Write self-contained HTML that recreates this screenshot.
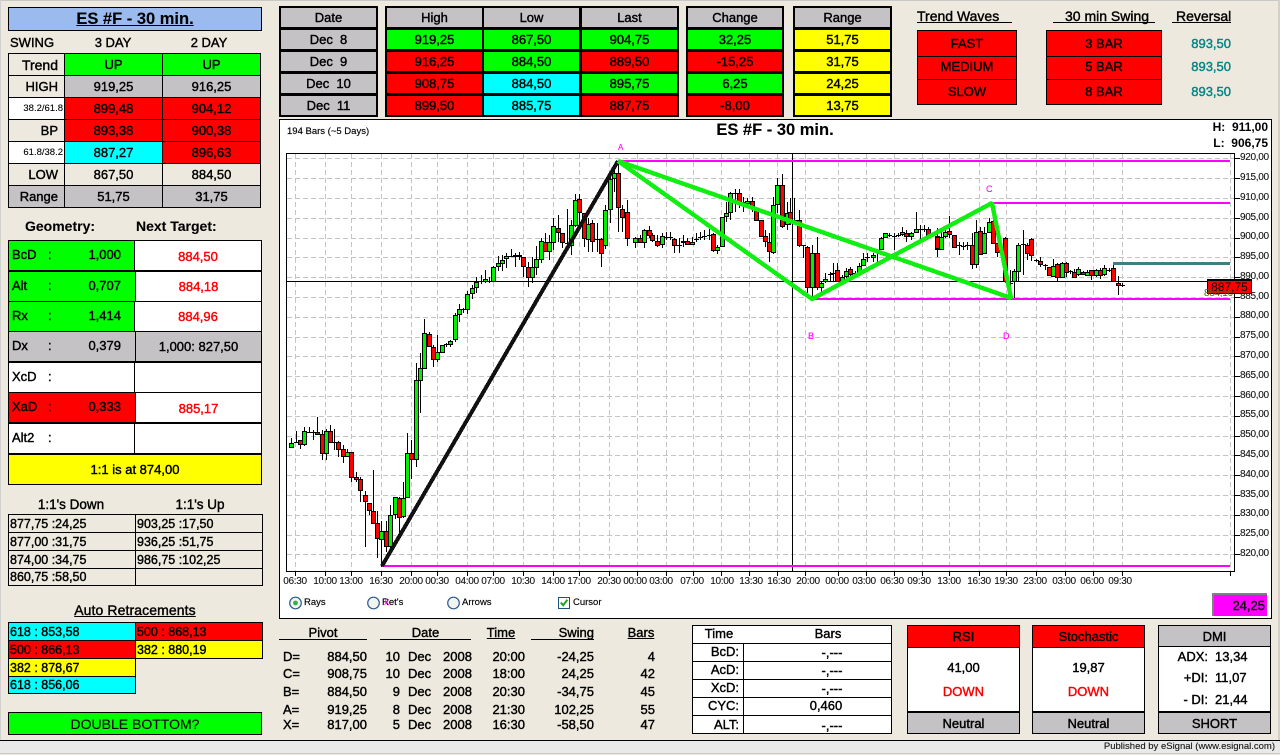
<!DOCTYPE html>
<html><head><meta charset="utf-8"><title>ES #F - 30 min.</title>
<style>
html,body{margin:0;padding:0}
body{width:1280px;height:754px;overflow:hidden;background:#ede9de;position:relative;font-family:"Liberation Sans",Arial,sans-serif;font-size:13px;color:#000;-webkit-text-stroke:.4px currentColor}
div{box-sizing:border-box;white-space:pre}
.a{position:absolute}
.b{position:absolute;border:1px solid #000;display:flex;align-items:center;justify-content:center}
.f{position:absolute;display:flex;align-items:center;justify-content:center}
.x{position:absolute;height:16px;line-height:16px}
.r{text-align:right}.c{text-align:center}
.g{background:#0f0}.R{background:#f00}.C{background:#0ff}.Y{background:#ff0}.S{background:#c4c2c5}.W{background:#fff}.K{background:#000}
.rt{color:#f00}
.lb{justify-content:flex-start;padding-left:1px}
.xl{position:absolute;top:576px;width:30px;height:12px;line-height:12px;text-align:center;font-size:10px;letter-spacing:-.3px;color:#111;-webkit-text-stroke:.1px #111}
.pl{position:absolute;left:1240px;height:12px;line-height:12px;font-size:10px;letter-spacing:-.3px;color:#111;-webkit-text-stroke:.1px #111}
</style></head><body>

<div class="a" style="left:0;top:0;width:1280px;height:1px;background:#c8c8c8"></div>
<div class="a" style="left:0;top:0;width:1px;height:741px;background:#d0d0d0"></div>
<div class="a" style="left:1278px;top:0;width:2px;height:741px;background:#d4d0c8"></div>

<!-- Title -->
<div class="b" style="left:8px;top:7px;width:254px;height:24px;background:#9bbaee;font-weight:bold;font-size:16.5px;text-decoration:underline;-webkit-text-stroke:.1px #000">ES #F - 30 min.</div>
<div class="x" style="left:10px;top:35px">SWING</div>
<div class="x c" style="left:64px;top:35px;width:98px">3 DAY</div>
<div class="x c" style="left:160px;top:35px;width:98px">2 DAY</div>

<div class="b" style="left:8px;top:53px;width:57px;height:23px;justify-content:flex-end;padding-right:6px;font-size:14px">Trend</div>
<div class="b g" style="left:64px;top:53px;width:99px;height:23px">UP</div>
<div class="b g" style="left:162px;top:53px;width:99px;height:23px">UP</div>
<div class="b" style="left:8px;top:75px;width:57px;height:23px;justify-content:flex-end;padding-right:6px">HIGH</div>
<div class="b S" style="left:64px;top:75px;width:99px;height:23px">919,25</div>
<div class="b S" style="left:162px;top:75px;width:99px;height:23px">916,25</div>
<div class="b W" style="left:8px;top:97px;width:57px;height:23px;justify-content:flex-end;padding-right:1px;font-size:9.5px;-webkit-text-stroke:.1px #000">38.2/61.8</div>
<div class="b R" style="left:64px;top:97px;width:99px;height:23px">899,48</div>
<div class="b R" style="left:162px;top:97px;width:99px;height:23px">904,12</div>
<div class="b" style="left:8px;top:119px;width:57px;height:23px;justify-content:flex-end;padding-right:6px">BP</div>
<div class="b R" style="left:64px;top:119px;width:99px;height:23px">893,38</div>
<div class="b R" style="left:162px;top:119px;width:99px;height:23px">900,38</div>
<div class="b W" style="left:8px;top:141px;width:57px;height:23px;justify-content:flex-end;padding-right:1px;font-size:9.5px;-webkit-text-stroke:.1px #000">61.8/38.2</div>
<div class="b C" style="left:64px;top:141px;width:99px;height:23px">887,27</div>
<div class="b R" style="left:162px;top:141px;width:99px;height:23px">896,63</div>
<div class="b" style="left:8px;top:163px;width:57px;height:23px;justify-content:flex-end;padding-right:6px">LOW</div>
<div class="b" style="left:64px;top:163px;width:99px;height:23px">867,50</div>
<div class="b" style="left:162px;top:163px;width:99px;height:23px">884,50</div>
<div class="b S" style="left:8px;top:185px;width:57px;height:23px;justify-content:flex-end;padding-right:6px">Range</div>
<div class="b S" style="left:64px;top:185px;width:99px;height:23px">51,75</div>
<div class="b S" style="left:162px;top:185px;width:99px;height:23px">31,75</div>

<div class="x" style="left:25px;top:218px;font-weight:bold;font-size:14px;-webkit-text-stroke:.1px #000">Geometry:</div>
<div class="x" style="left:136px;top:218px;font-weight:bold;font-size:14px;-webkit-text-stroke:.1px #000">Next Target:</div>

<!-- Geometry -->
<div class="b g" style="left:8px;top:240px;width:127px;height:32px"></div><div class="b W rt" style="left:134px;top:240px;width:128px;height:32px">884,50</div>
<div class="b g" style="left:8px;top:271px;width:128px;height:31px"></div><div class="b W rt" style="left:135px;top:271px;width:127px;height:31px">884,18</div>
<div class="b g" style="left:8px;top:301px;width:127px;height:31px"></div><div class="b W rt" style="left:134px;top:301px;width:128px;height:31px">884,96</div>
<div class="b S" style="left:8px;top:331px;width:128px;height:32px"></div><div class="b S" style="left:135px;top:331px;width:127px;height:32px;padding-bottom:2px">1,000: 827,50</div>
<div class="b W" style="left:8px;top:362px;width:127px;height:31px"></div><div class="b W" style="left:134px;top:362px;width:128px;height:31px"></div>
<div class="b R" style="left:8px;top:392px;width:128px;height:32px"></div><div class="b W rt" style="left:135px;top:392px;width:127px;height:32px">885,17</div>
<div class="b W" style="left:8px;top:423px;width:127px;height:32px"></div><div class="b W" style="left:134px;top:423px;width:128px;height:32px"></div>
<div class="b Y" style="left:8px;top:454px;width:254px;height:31px">1:1 is at 874,00</div>
<div class="a K" style="left:8px;top:270px;width:254px;height:2px"></div>
<div class="a K" style="left:8px;top:361px;width:254px;height:2px"></div>
<div class="a K" style="left:8px;top:422px;width:254px;height:2px"></div>
<div class="a K" style="left:8px;top:453px;width:254px;height:2px"></div>
<div class="x" style="left:12px;top:247px">BcD</div><div class="x" style="left:48px;top:247px">:</div><div class="x r" style="left:71px;top:247px;width:50px">1,000</div>
<div class="x" style="left:12px;top:278px">Alt</div><div class="x" style="left:48px;top:278px">:</div><div class="x r" style="left:71px;top:278px;width:50px">0,707</div>
<div class="x" style="left:12px;top:308px">Rx</div><div class="x" style="left:48px;top:308px">:</div><div class="x r" style="left:71px;top:308px;width:50px">1,414</div>
<div class="x" style="left:12px;top:338px">Dx</div><div class="x" style="left:48px;top:338px">:</div><div class="x r" style="left:71px;top:338px;width:50px">0,379</div>
<div class="x" style="left:12px;top:369px">XcD</div><div class="x" style="left:48px;top:369px">:</div>
<div class="x" style="left:12px;top:399px">XaD</div><div class="x" style="left:48px;top:399px">:</div><div class="x r" style="left:71px;top:399px;width:50px">0,333</div>
<div class="x" style="left:12px;top:430px">Alt2</div><div class="x" style="left:48px;top:430px">:</div>

<!-- 1:1 -->
<div class="x c" style="left:11px;top:497px;width:120px;font-size:13.5px">1:1's Down</div>
<div class="x c" style="left:140px;top:497px;width:120px;font-size:13.5px">1:1's Up</div>
<div class="b lb" style="left:8px;top:514px;width:128px;height:19px;font-size:12.5px">877,75 :24,25</div><div class="b lb" style="left:135px;top:514px;width:128px;height:19px;font-size:12.5px">903,25 :17,50</div>
<div class="b lb" style="left:8px;top:532px;width:128px;height:19px;font-size:12.5px">877,00 :31,75</div><div class="b lb" style="left:135px;top:532px;width:128px;height:19px;font-size:12.5px">936,25 :51,75</div>
<div class="b lb" style="left:8px;top:550px;width:128px;height:19px;font-size:12.5px">874,00 :34,75</div><div class="b lb" style="left:135px;top:550px;width:128px;height:19px;font-size:12.5px">986,75 :102,25</div>
<div class="b lb" style="left:8px;top:568px;width:128px;height:18px;font-size:12.5px">860,75 :58,50</div><div class="b lb" style="left:135px;top:568px;width:128px;height:18px"></div>

<div class="x c" style="left:8px;top:602px;width:254px;font-size:14px;letter-spacing:.1px;text-decoration:underline">Auto Retracements</div>
<div class="b lb C" style="left:8px;top:622px;width:128px;height:19px;font-size:12.5px">618 : 853,58</div><div class="b lb R" style="left:135px;top:622px;width:128px;height:19px;font-size:12.5px">500 : 868,13</div>
<div class="b lb R" style="left:8px;top:640px;width:128px;height:19px;font-size:12.5px">500 : 866,13</div><div class="b lb Y" style="left:135px;top:640px;width:128px;height:19px;font-size:12.5px">382 : 880,19</div>
<div class="b lb Y" style="left:8px;top:658px;width:128px;height:19px;font-size:12.5px">382 : 878,67</div>
<div class="b lb C" style="left:8px;top:676px;width:128px;height:18px;font-size:12.5px">618 : 856,06</div>

<div class="b g" style="left:8px;top:712px;width:254px;height:23px;font-size:14px;-webkit-text-stroke:.1px #000">DOUBLE BOTTOM?</div>

<!-- Top tables -->
<div class="a K" style="left:279px;top:6px;width:99px;height:111px"></div>
<div class="a K" style="left:385px;top:6px;width:294px;height:111px"></div>
<div class="a K" style="left:686px;top:6px;width:98px;height:111px"></div>
<div class="a K" style="left:793px;top:6px;width:99px;height:111px"></div>

<div class="f S" style="left:281px;top:8px;width:95px;height:19px">Date</div>
<div class="f S" style="left:281px;top:30px;width:95px;height:19px">Dec  8</div>
<div class="f S" style="left:281px;top:52px;width:95px;height:19px">Dec  9</div>
<div class="f S" style="left:281px;top:74px;width:95px;height:19px">Dec  10</div>
<div class="f S" style="left:281px;top:96px;width:95px;height:19px">Dec  11</div>

<div class="f S" style="left:387px;top:8px;width:95px;height:19px">High</div>
<div class="f S" style="left:484px;top:8px;width:95px;height:19px">Low</div>
<div class="f S" style="left:582px;top:8px;width:95px;height:19px">Last</div>
<div class="f g" style="left:387px;top:30px;width:95px;height:19px">919,25</div>
<div class="f g" style="left:484px;top:30px;width:95px;height:19px">867,50</div>
<div class="f g" style="left:582px;top:30px;width:95px;height:19px">904,75</div>
<div class="f R" style="left:387px;top:52px;width:95px;height:19px">916,25</div>
<div class="f g" style="left:484px;top:52px;width:95px;height:19px">884,50</div>
<div class="f R" style="left:582px;top:52px;width:95px;height:19px">889,50</div>
<div class="f R" style="left:387px;top:74px;width:95px;height:19px">908,75</div>
<div class="f C" style="left:484px;top:74px;width:95px;height:19px">884,50</div>
<div class="f g" style="left:582px;top:74px;width:95px;height:19px">895,75</div>
<div class="f R" style="left:387px;top:96px;width:95px;height:19px">899,50</div>
<div class="f C" style="left:484px;top:96px;width:95px;height:19px">885,75</div>
<div class="f R" style="left:582px;top:96px;width:95px;height:19px">887,75</div>

<div class="f S" style="left:688px;top:8px;width:94px;height:19px">Change</div>
<div class="f g" style="left:688px;top:30px;width:94px;height:19px">32,25</div>
<div class="f R" style="left:688px;top:52px;width:94px;height:19px">-15,25</div>
<div class="f g" style="left:688px;top:74px;width:94px;height:19px">6,25</div>
<div class="f R" style="left:688px;top:96px;width:94px;height:19px">-8,00</div>

<div class="f S" style="left:795px;top:8px;width:95px;height:19px">Range</div>
<div class="f Y" style="left:795px;top:30px;width:95px;height:19px">51,75</div>
<div class="f Y" style="left:795px;top:52px;width:95px;height:19px">31,75</div>
<div class="f Y" style="left:795px;top:74px;width:95px;height:19px">24,25</div>
<div class="f Y" style="left:795px;top:96px;width:95px;height:19px">13,75</div>

<!-- Trend waves -->
<div class="x" style="left:917px;top:8px;font-size:14px">Trend Waves</div>
<div class="a K" style="left:917px;top:22px;width:95px;height:1px"></div>
<div class="x" style="left:1065px;top:8px;font-size:14px">30 min Swing</div>
<div class="a K" style="left:1053px;top:22px;width:102px;height:1px"></div>
<div class="x" style="left:1176px;top:8px;font-size:14px">Reversal</div>
<div class="a K" style="left:1172px;top:22px;width:59px;height:1px"></div>

<div class="b R" style="left:917px;top:30px;width:100px;height:27px">FAST</div>
<div class="b R" style="left:917px;top:56px;width:100px;height:24px;padding-bottom:4px">MEDIUM</div>
<div class="b R" style="left:917px;top:79px;width:100px;height:26px;padding-bottom:2px">SLOW</div>
<div class="b R" style="left:1046px;top:30px;width:116px;height:27px">3 BAR</div>
<div class="b R" style="left:1046px;top:56px;width:116px;height:24px;padding-bottom:4px">5 BAR</div>
<div class="b R" style="left:1046px;top:79px;width:116px;height:26px;padding-bottom:2px">8 BAR</div>
<div class="x r" style="left:1181px;top:36px;width:50px;color:#008585">893,50</div>
<div class="x r" style="left:1181px;top:59px;width:50px;color:#008585">893,50</div>
<div class="x r" style="left:1181px;top:84px;width:50px;color:#008585">893,50</div>

<!-- Chart -->
<div class="a W" style="left:279px;top:119px;width:993px;height:500px;border:1px solid #000"></div>
<div class="x" style="left:287px;top:124px;font-size:9.5px;-webkit-text-stroke:.15px #000">194 Bars (~5 Days)</div>
<div class="x c" style="left:675px;top:122px;width:200px;font-size:16.5px;font-weight:bold;-webkit-text-stroke:.1px #000">ES #F - 30 min.</div>
<div class="x r" style="left:1170px;top:119px;width:98px;font-size:12px;font-weight:bold;-webkit-text-stroke:0">H:  911,00</div>
<div class="x r" style="left:1170px;top:135px;width:98px;font-size:12px;font-weight:bold;-webkit-text-stroke:0">L:  906,75</div>

<svg id="ch" class="a" style="left:0;top:0" width="1280" height="754" viewBox="0 0 1280 754" xmlns="http://www.w3.org/2000/svg">
<g id="grid" stroke="#c4c4c4" stroke-width="1" stroke-dasharray="5 3" fill="none" shape-rendering="crispEdges"></g>
<g id="ticks" stroke="#000" stroke-width="1" fill="none" shape-rendering="crispEdges"></g>
<g stroke="#000" stroke-width="1" shape-rendering="crispEdges" fill="none">
<path d="M286.5 153.5H1234.5V571.5H286.5Z"/>
<path d="M792.5 153V571M286 281.5H1208"/>
</g>
<g id="cand" shape-rendering="crispEdges"></g>
<g shape-rendering="crispEdges" fill="none">
<g stroke="#f0f" stroke-width="2">
<path d="M618 161H1230M812 299H1230M992 203H1230M382 566H1230"/>
</g>
<path d="M1113 263.5H1230" stroke="#3f7f80" stroke-width="3"/>
<path d="M382 566L618 161" stroke="#111" stroke-width="4"/>
<path d="M618 161L812 299L992 203L1011 298L618 161" stroke="#11ee11" stroke-width="4.4" stroke-linejoin="bevel"/>
</g>
</svg>

<div class="a" style="left:618px;top:143px;width:8px;height:10px;line-height:10px;font-size:8px;color:#f0f;-webkit-text-stroke:.1px #f0f">A</div>
<div class="a" style="left:808px;top:331px;width:8px;height:10px;line-height:10px;font-size:9px;color:#f0f;-webkit-text-stroke:.1px #f0f">B</div>
<div class="a" style="left:986px;top:184px;width:8px;height:10px;line-height:10px;font-size:9px;color:#f0f;-webkit-text-stroke:.1px #f0f">C</div>
<div class="a" style="left:1003px;top:331px;width:8px;height:10px;line-height:10px;font-size:9px;color:#f0f;-webkit-text-stroke:.1px #f0f">D</div>

<!-- Y labels -->
<div class="pl" style="top:152px">920,00</div><div class="pl" style="top:172px">915,00</div><div class="pl" style="top:192px">910,00</div><div class="pl" style="top:212px">905,00</div><div class="pl" style="top:231px">900,00</div><div class="pl" style="top:251px">895,00</div><div class="pl" style="top:271px">890,00</div><div class="pl" style="top:291px">885,00</div><div class="pl" style="top:310px">880,00</div><div class="pl" style="top:330px">875,00</div><div class="pl" style="top:350px">870,00</div><div class="pl" style="top:370px">865,00</div><div class="pl" style="top:390px">860,00</div><div class="pl" style="top:409px">855,00</div><div class="pl" style="top:429px">850,00</div><div class="pl" style="top:449px">845,00</div><div class="pl" style="top:469px">840,00</div><div class="pl" style="top:489px">835,00</div><div class="pl" style="top:508px">830,00</div><div class="pl" style="top:528px">825,00</div><div class="pl" style="top:548px">820,00</div>

<div class="b R" style="left:1207px;top:279px;width:45px;height:15px;border-top-width:2px;font-size:12px;-webkit-text-stroke:0">887,75</div>
<div class="a" style="left:1204px;top:288px;width:30px;height:12px;line-height:12px;font-size:10px;letter-spacing:-.3px;color:#6b5200;-webkit-text-stroke:0">884,16</div>

<!-- X labels -->
<div class="xl" style="left:280px">06:30</div><div class="xl" style="left:310px">10:00</div><div class="xl" style="left:336px">13:00</div><div class="xl" style="left:366px">16:30</div><div class="xl" style="left:396px">20:00</div><div class="xl" style="left:422px">00:30</div><div class="xl" style="left:452px">04:00</div><div class="xl" style="left:478px">07:00</div><div class="xl" style="left:508px">10:30</div><div class="xl" style="left:538px">14:00</div><div class="xl" style="left:564px">17:00</div><div class="xl" style="left:594px">20:30</div><div class="xl" style="left:620px">00:00</div><div class="xl" style="left:646px">03:00</div><div class="xl" style="left:677px">07:00</div><div class="xl" style="left:707px">10:00</div><div class="xl" style="left:736px">13:30</div><div class="xl" style="left:764px">16:30</div><div class="xl" style="left:793px">20:00</div><div class="xl" style="left:822px">00:00</div><div class="xl" style="left:849px">03:00</div><div class="xl" style="left:877px">06:30</div><div class="xl" style="left:904px">09:30</div><div class="xl" style="left:934px">13:00</div><div class="xl" style="left:964px">16:30</div><div class="xl" style="left:991px">19:30</div><div class="xl" style="left:1020px">23:00</div><div class="xl" style="left:1049px">03:00</div><div class="xl" style="left:1077px">06:00</div><div class="xl" style="left:1105px">09:30</div>

<!-- Radios -->
<svg class="a" style="left:0;top:590px" width="600" height="26" viewBox="0 590 600 26" xmlns="http://www.w3.org/2000/svg">
<g fill="#f4f4ee" stroke="#2a5a8a" stroke-width="1.2">
<circle cx="295.5" cy="603" r="5.8"/><circle cx="373.5" cy="603" r="5.8"/><circle cx="453.5" cy="603" r="5.8"/>
</g>
<circle cx="295.5" cy="603" r="2.4" fill="#2fb44a"/>
<rect x="558.5" y="597.5" width="11" height="11" fill="#fff" stroke="#1c5180" stroke-width="1"/>
<path d="M560.8 602.5l2.4 2.8 4.2-5.6" fill="none" stroke="#21a121" stroke-width="2"/>
</svg>
<div class="x" style="left:304px;top:595px;font-size:9.5px;-webkit-text-stroke:.15px #000">Rays</div>
<div class="x" style="left:382px;top:595px;font-size:9.5px;-webkit-text-stroke:.15px #000">Ret's</div>
<div class="a" style="left:384px;top:598px;height:10px;line-height:10px;font-size:8px;color:#f0f;-webkit-text-stroke:0">X</div>
<div class="x" style="left:462px;top:595px;font-size:9.5px;-webkit-text-stroke:.15px #000">Arrows</div>
<div class="x" style="left:573px;top:595px;font-size:9.5px;-webkit-text-stroke:.15px #000">Cursor</div>

<div class="b" style="left:1212px;top:593px;width:55px;height:23px;background:#f0f;border:0;border-top:2px solid #808080;border-left:2px solid #808080;justify-content:flex-end;padding-right:2px">24,25</div>

<!-- Pivot table -->
<div class="x c" style="left:279px;top:625px;width:88px">Pivot</div><div class="a K" style="left:279px;top:639px;width:88px;height:1px"></div>
<div class="x c" style="left:380px;top:625px;width:91px">Date</div><div class="a K" style="left:380px;top:639px;width:91px;height:1px"></div>
<div class="x c" style="left:481px;top:625px;width:40px;text-decoration:underline">Time</div>
<div class="x r" style="left:531px;top:625px;width:63px">Swing</div><div class="a K" style="left:531px;top:639px;width:63px;height:1px"></div>
<div class="x c" style="left:621px;top:625px;width:40px;text-decoration:underline">Bars</div>

<div class="x" style="left:283px;top:649px">D=</div><div class="x r" style="left:317px;top:649px;width:50px">884,50</div><div class="x r" style="left:380px;top:649px;width:20px">10</div><div class="x" style="left:408px;top:649px">Dec</div><div class="x" style="left:443px;top:649px">2008</div><div class="x r" style="left:485px;top:649px;width:40px">20:00</div><div class="x r" style="left:544px;top:649px;width:50px">-24,25</div><div class="x r" style="left:625px;top:649px;width:30px">4</div>
<div class="x" style="left:283px;top:666px">C=</div><div class="x r" style="left:317px;top:666px;width:50px">908,75</div><div class="x r" style="left:380px;top:666px;width:20px">10</div><div class="x" style="left:408px;top:666px">Dec</div><div class="x" style="left:443px;top:666px">2008</div><div class="x r" style="left:485px;top:666px;width:40px">18:00</div><div class="x r" style="left:544px;top:666px;width:50px">24,25</div><div class="x r" style="left:625px;top:666px;width:30px">42</div>
<div class="x" style="left:283px;top:684px">B=</div><div class="x r" style="left:317px;top:684px;width:50px">884,50</div><div class="x r" style="left:380px;top:684px;width:20px">9</div><div class="x" style="left:408px;top:684px">Dec</div><div class="x" style="left:443px;top:684px">2008</div><div class="x r" style="left:485px;top:684px;width:40px">20:30</div><div class="x r" style="left:544px;top:684px;width:50px">-34,75</div><div class="x r" style="left:625px;top:684px;width:30px">45</div>
<div class="x" style="left:283px;top:702px">A=</div><div class="x r" style="left:317px;top:702px;width:50px">919,25</div><div class="x r" style="left:380px;top:702px;width:20px">8</div><div class="x" style="left:408px;top:702px">Dec</div><div class="x" style="left:443px;top:702px">2008</div><div class="x r" style="left:485px;top:702px;width:40px">21:30</div><div class="x r" style="left:544px;top:702px;width:50px">102,25</div><div class="x r" style="left:625px;top:702px;width:30px">55</div>
<div class="x" style="left:283px;top:717px">X=</div><div class="x r" style="left:317px;top:717px;width:50px">817,00</div><div class="x r" style="left:380px;top:717px;width:20px">5</div><div class="x" style="left:408px;top:717px">Dec</div><div class="x" style="left:443px;top:717px">2008</div><div class="x r" style="left:485px;top:717px;width:40px">16:30</div><div class="x r" style="left:544px;top:717px;width:50px">-58,50</div><div class="x r" style="left:625px;top:717px;width:30px">47</div>

<!-- Time / Bars -->
<div class="b W" style="left:692px;top:625px;width:200px;height:109px"></div>
<div class="a K" style="left:692px;top:643px;width:200px;height:1px"></div>
<div class="a K" style="left:692px;top:661px;width:200px;height:1px"></div>
<div class="a K" style="left:692px;top:679px;width:200px;height:1px"></div>
<div class="a K" style="left:692px;top:697px;width:200px;height:1px"></div>
<div class="a K" style="left:692px;top:715px;width:200px;height:1px"></div>
<div class="a K" style="left:743px;top:643px;width:1px;height:90px"></div>
<div class="x c" style="left:699px;top:626px;width:40px">Time</div>
<div class="x c" style="left:808px;top:626px;width:40px">Bars</div>
<div class="x r" style="left:699px;top:644px;width:40px">BcD:</div><div class="x c" style="left:802px;top:645px;width:60px">-,---</div>
<div class="x r" style="left:699px;top:662px;width:40px">AcD:</div><div class="x c" style="left:802px;top:663px;width:60px">-,---</div>
<div class="x r" style="left:699px;top:680px;width:40px">XcD:</div><div class="x c" style="left:802px;top:681px;width:60px">-,---</div>
<div class="x r" style="left:699px;top:698px;width:40px">CYC:</div><div class="x c" style="left:796px;top:698px;width:60px">0,460</div>
<div class="x r" style="left:699px;top:717px;width:40px">ALT:</div><div class="x c" style="left:802px;top:718px;width:60px">-,---</div>

<!-- RSI -->
<div class="b W" style="left:907px;top:625px;width:113px;height:109px"></div>
<div class="b R" style="left:907px;top:625px;width:113px;height:23px">RSI</div>
<div class="b S" style="left:907px;top:711px;width:113px;height:23px;border-top-width:2px">Neutral</div>
<div class="x c" style="left:907px;top:660px;width:113px">41,00</div>
<div class="x c rt" style="left:907px;top:684px;width:113px">DOWN</div>

<div class="b W" style="left:1032px;top:625px;width:113px;height:109px"></div>
<div class="b R" style="left:1032px;top:625px;width:113px;height:23px">Stochastic</div>
<div class="b S" style="left:1032px;top:711px;width:113px;height:23px;border-top-width:2px">Neutral</div>
<div class="x c" style="left:1032px;top:660px;width:113px">19,87</div>
<div class="x c rt" style="left:1032px;top:684px;width:113px">DOWN</div>

<div class="b W" style="left:1158px;top:625px;width:113px;height:109px"></div>
<div class="b S" style="left:1158px;top:625px;width:113px;height:22px">DMI</div>
<div class="b S" style="left:1158px;top:711px;width:113px;height:23px;border-top-width:2px">SHORT</div>
<div class="x r" style="left:1160px;top:649px;width:48px">ADX:</div><div class="x" style="left:1215px;top:649px">13,34</div>
<div class="x r" style="left:1160px;top:670px;width:48px">+DI:</div><div class="x" style="left:1215px;top:670px">11,07</div>
<div class="x r" style="left:1160px;top:692px;width:48px">- DI:</div><div class="x" style="left:1215px;top:692px">21,44</div>

<!-- Footer -->
<div class="a K" style="left:0;top:740px;width:1280px;height:1px"></div>
<div class="a" style="left:0;top:741px;width:1280px;height:13px;background:#e9e9e9"></div>
<div class="a" style="left:0;top:753px;width:1280px;height:1px;background:#c8c8c8"></div>
<div class="x r" style="left:1000px;top:739px;width:275px;font-size:9.5px;-webkit-text-stroke:.1px #111;color:#111">Published by eSignal (www.esignal.com)</div>

<script>
(function(){
var NS="http://www.w3.org/2000/svg";
function el(n,a,p){var e=document.createElementNS(NS,n);for(var k in a)e.setAttribute(k,a[k]);p.appendChild(e);return e}
var g=document.getElementById("grid"),tk=document.getElementById("ticks"),cd=document.getElementById("cand");
var d="";
for(var i=0;i<21;i++){var y=Math.round(158.3+i*19.8);d+="M287 "+(y+.5)+"H1234 ";
 el("path",{d:"M1235 "+(y+.5)+"H1240"},tk);}
var vx=[295,325,351,381,411,437,467,493,523,553,579,609,637,666,693,721,749,777,805,838,866,894,922,949,979,1006,1036,1065,1093,1122,1230];
vx.forEach(function(x){d+="M"+(x+.5)+" 154V571 ";el("path",{d:"M"+(x+.5)+" 571V576"},tk)});
el("path",{d:d},g);
var S=[
[280,380,"34 190 200 175 205 g;47 185 185 152 190 d;61 181 193 180 207 r;73 154 193 142 197 g;86 155 155 142 160 d;100 157 157 150 180 d;112 157 163 110 165 r;125 163 220 150 240 r;137 154 220 148 240 g;151 154 187 135 190 r;163 186 186 147 210 d;175 187 208 182 230 r;190 208 228 195 250 r;202 217 228 208 232 g;214 217 292 215 305 r;229 292 298 277 305 r;241 298 331 290 365 r;254 346 364 333 500 r;266 370 391 368 405 r;280 392 430 270 433 r;292 430 475 392 533 r;304 452 478 422 560 g;319 454 498 423 515 r;331 404 498 375 520 g;344 352 403 350 418 g;358 353 412 350 460 r;370 355 409 305 415 g;382 220 352 160 355 g;394 220 238 180 298 r;409 0 238 -51 262 g"],
[280,150,"421 655 690 610 789 g;433 550 655 508 655 g;448 553 587 547 590 r;460 592 628 585 650 r;472 607 628 555 635 g;487 586 605 585 607 g;499 583 583 580 590 d;511 572 583 570 590 g;526 494 568 490 575 g;538 478 491 462 515 g;550 477 477 475 490 d;562 433 478 423 492 g;577 415 430 405 447 g;589 395 412 380 428 g;602 393 393 375 403 d;616 388 394 360 400 g;628 393 393 380 400 d;640 352 393 349 395 g;655 340 347 318 362 g;667 329 338 315 362 g;679 317 325 310 355 g;692 318 318 298 322 d;706 314 319 310 350 g;718 314 319 305 330 r;730 322 347 320 380 r;745 350 380 337 410 r;757 350 380 320 400 g;769 328 350 288 375 g;784 274 328 265 338 g;796 275 304 250 305 r;808 277 304 255 330 g;820 229 277 205 300 g;835 235 245 195 275 r;847 250 277 250 295 r;860 278 278 178 290 d;874 226 285 210 315 g;886 151 226 132 230 g;898 148 187 132 230 r;913 190 263 190 290 r;925 223 266 205 307 g;937 220 274 210 305 r;950 268 268 220 305 d;964 268 310 265 350 r;976 181 286 165 298 g;989 88 178 75 220 g;1003 70 85 45 125 g;1015 70 172 35 245 r"],
[600,150,"67 178 202 165 245 r;82 187 265 150 288 r;106 263 277 262 295 g;120 263 277 255 280 r;133 241 277 238 295 g;146 241 254 228 265 r;157 256 269 248 275 r;172 274 286 255 292 r;185 257 283 250 295 g;197 260 260 245 270 d;210 262 262 245 270 d;223 268 286 265 310 r;236 285 285 265 310 d;248 272 277 255 290 g;262 272 283 265 285 r;275 275 283 260 285 g;288 266 266 250 275 d;300 262 262 245 270 d;313 257 257 240 270 d;327 254 254 237 270 d;340 252 300 250 305 r;352 290 300 285 312 g;365 202 288 200 290 g;379 188 199 155 215 g;391 130 187 125 210 g;404 130 130 118 185 d;416 130 155 118 175 r;430 155 155 142 185 d;441 154 160 145 170 g;456 154 170 142 185 r;469 180 209 170 212 r;482 211 257 210 260 r;494 259 272 240 290 r;508 275 302 250 335 r;520 165 307 140 312 g;532 106 163 85 190 g;547 106 227 72 235 r;560 190 222 155 240 g;570 187 207 145 225 r;583 210 210 145 225 d;598 211 284 180 290 r;610 286 286 285 325 d;622 290 410 288 430 r;637 310 412 285 445 g;650 310 412 262 420 r;662 398 410 395 425 g;676 388 392 370 400 g;690 373 373 365 395 d;700 370 370 338 395 d;712 360 392 340 395 r;727 380 392 375 395 g;739 362 378 355 392 g;751 358 372 350 380 r;765 370 370 362 378 d;778 347 370 340 372 g;790 326 344 310 345 g;802 320 320 310 335 d;818 316 322 310 335 g;830 305 305 298 335 d;842 265 298 262 300 g;856 250 262 248 265 g;868 255 255 250 262 d;881 258 258 250 300 d;893 254 254 248 262 d;906 247 252 232 258 g;919 250 258 240 275 r;934 250 258 245 270 g;947 238 247 185 250 g;960 237 237 225 270 d;972 236 236 225 245 d;985 236 257 232 262 r;1010 258 295 255 320 r"],
[930,170,"20 202 236 175 260 r;34 202 238 180 240 g;46 185 198 170 205 g;58 184 192 138 205 r;72 195 230 195 232 r;86 225 225 215 255 d;98 227 227 215 240 d;110 225 225 215 240 d;125 226 283 190 297 r;137 187 283 150 295 g;150 184 253 170 255 r;163 190 250 170 252 g;176 157 185 145 188 g;188 154 218 125 220 r;200 220 245 220 262 r;226 204 333 200 340 r;240 338 338 300 380 d;253 302 333 298 385 g;265 226 302 220 335 g;278 221 221 180 315 d;292 226 250 218 270 r;304 208 256 205 272 r;317 270 270 268 275 d;331 274 283 262 290 r;344 285 285 282 300 d;356 292 314 290 315 r;370 287 319 268 320 g;382 283 321 280 335 r;395 278 320 275 322 g;407 278 305 277 320 r;420 304 304 300 312 d;432 305 320 298 322 r;445 296 313 290 318 g;458 305 312 302 315 r;470 305 315 300 318 g;484 301 316 300 330 r;498 301 316 298 322 g;511 300 314 295 327 r;523 295 311 285 318 g;538 300 300 295 305 d;550 295 333 285 337 r;563 338 345 318 375 r;576 346 346 338 352 d"]];
var w="",gb="",rb="",dj="";
S.forEach(function(s){var ox=s[0],oy=s[1];s[2].split(";").forEach(function(r){
 var p=r.split(" "),X=Math.round(ox+p[0]/3),T=Math.round(oy+p[1]/3)+.5,B=Math.round(oy+p[2]/3)+.5,WT=Math.round(oy+p[3]/3),WB=Math.round(oy+p[4]/3);
 w+="M"+(X+.5)+" "+WT+"V"+WB+" ";
 var b="M"+(X-1.5)+" "+T+"H"+(X+2.5)+"V"+B+"H"+(X-1.5)+"Z ";
 if(p[5]=="g")gb+=b;else if(p[5]=="r")rb+=b;else dj+="M"+(X-2)+" "+T+"H"+(X+3)+" ";
})});
el("path",{d:w+dj,stroke:"#000","stroke-width":1,fill:"none"},cd);
el("path",{d:gb,stroke:"#000","stroke-width":1,fill:"#00f000"},cd);
el("path",{d:rb,stroke:"#000","stroke-width":1,fill:"#f00"},cd);
})();
</script>
</body></html>
